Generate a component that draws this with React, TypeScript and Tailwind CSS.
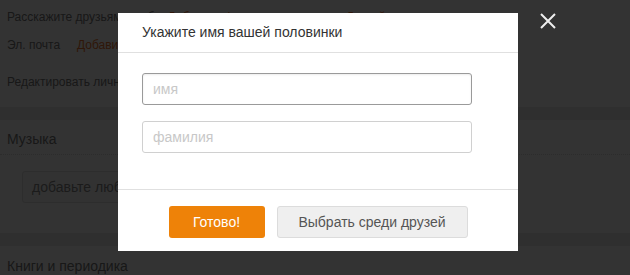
import React from "react";

export default function App() {
  return (
    <div
      className="relative w-[630px] h-[275px] overflow-hidden bg-white text-[#555]"
      style={{ fontFamily: '"Liberation Sans", Arial, sans-serif' }}
    >
      {/* Page behind the overlay */}
      <div className="flex flex-col">
        <div className="h-[34px] px-[7px] flex items-center text-[12px] text-[#777] whitespace-nowrap">
          Расскажите друзьям о себе,&nbsp;<span className="text-[#eb722e]">Добавить фото</span>&nbsp;или&nbsp;<span className="text-[#eb722e]">интересы</span>&nbsp;и&nbsp;<span className="text-[#eb722e]">Друзей</span>
        </div>
        <div className="h-[22px] px-[7px] flex items-center text-[12px] text-[#777] whitespace-nowrap">
          <span className="w-[70px]">Эл. почта</span>
          <span className="text-[#eb722e]">Добавить</span>
        </div>
        <div className="h-[51px] px-[7px] flex items-center text-[12px] text-[#777] whitespace-nowrap">
          Редактировать личные данные
        </div>
        <div className="h-[13px] bg-[#ebebeb]" />
        <div className="h-[35px] px-[7px] flex items-center text-[14px] text-[#777] border-b border-dotted border-[#ddd] pt-[5px]">
          Музыка
        </div>
        <div className="h-[78px] pl-[22px] pt-[16px]">
          <div className="w-[300px] h-[32px] border border-[#e0e0e0] bg-[#fafafa] rounded-[3px] px-[9px] flex items-center text-[14px] text-[#888] whitespace-nowrap">
            добавьте любимых исполнителей
          </div>
        </div>
        <div className="h-[13px] bg-[#ebebeb]" />
        <div className="h-[40px] px-[7px] flex items-center text-[14px] text-[#777]">
          Книги и периодика
        </div>
      </div>

      {/* Overlay */}
      <div className="absolute inset-0 bg-black/80" />

      {/* Close */}
      <button className="absolute left-[538px] top-[11px] w-[20px] h-[20px] flex items-center justify-center">
        <svg width="18" height="18" viewBox="0 0 18 18">
          <path d="M2 2 L16 16 M16 2 L2 16" stroke="#eeeeee" strokeWidth="2" />
        </svg>
      </button>

      {/* Dialog */}
      <div className="absolute left-[118px] top-[13px] w-[400px] bg-white flex flex-col">
        <div className="h-[40px] px-[24px] flex items-center text-[14px] text-[#333] border-b border-[#e0e0e0]">
          Укажите имя вашей половинки
        </div>
        <div className="flex flex-col gap-[16px] px-[24px] pt-[20px] pb-[36px] border-b border-[#e0e0e0]">
          <input
            placeholder="имя"
            className="w-[330px] h-[32px] px-[10px] rounded-[3px] border border-[#9a9a9a] text-[14px] outline-none placeholder:text-[#c8c8c8] shadow-[inset_0_1px_2px_rgba(0,0,0,0.08)]"
          />
          <input
            placeholder="фамилия"
            className="w-[330px] h-[32px] px-[10px] rounded-[3px] border border-[#d0d0d0] text-[14px] outline-none placeholder:text-[#c8c8c8]"
          />
        </div>
        <div className="flex justify-center gap-[12px] pt-[16px] pb-[13px]">
          <button className="w-[96px] h-[32px] rounded-[3px] bg-[#ee8208] text-white text-[14px]">
            Готово!
          </button>
          <button className="w-[191px] h-[32px] rounded-[3px] bg-[#efefef] border border-[#dcdcdc] text-[#555] text-[14px]">
            Выбрать среди друзей
          </button>
        </div>
      </div>
    </div>
  );
}
